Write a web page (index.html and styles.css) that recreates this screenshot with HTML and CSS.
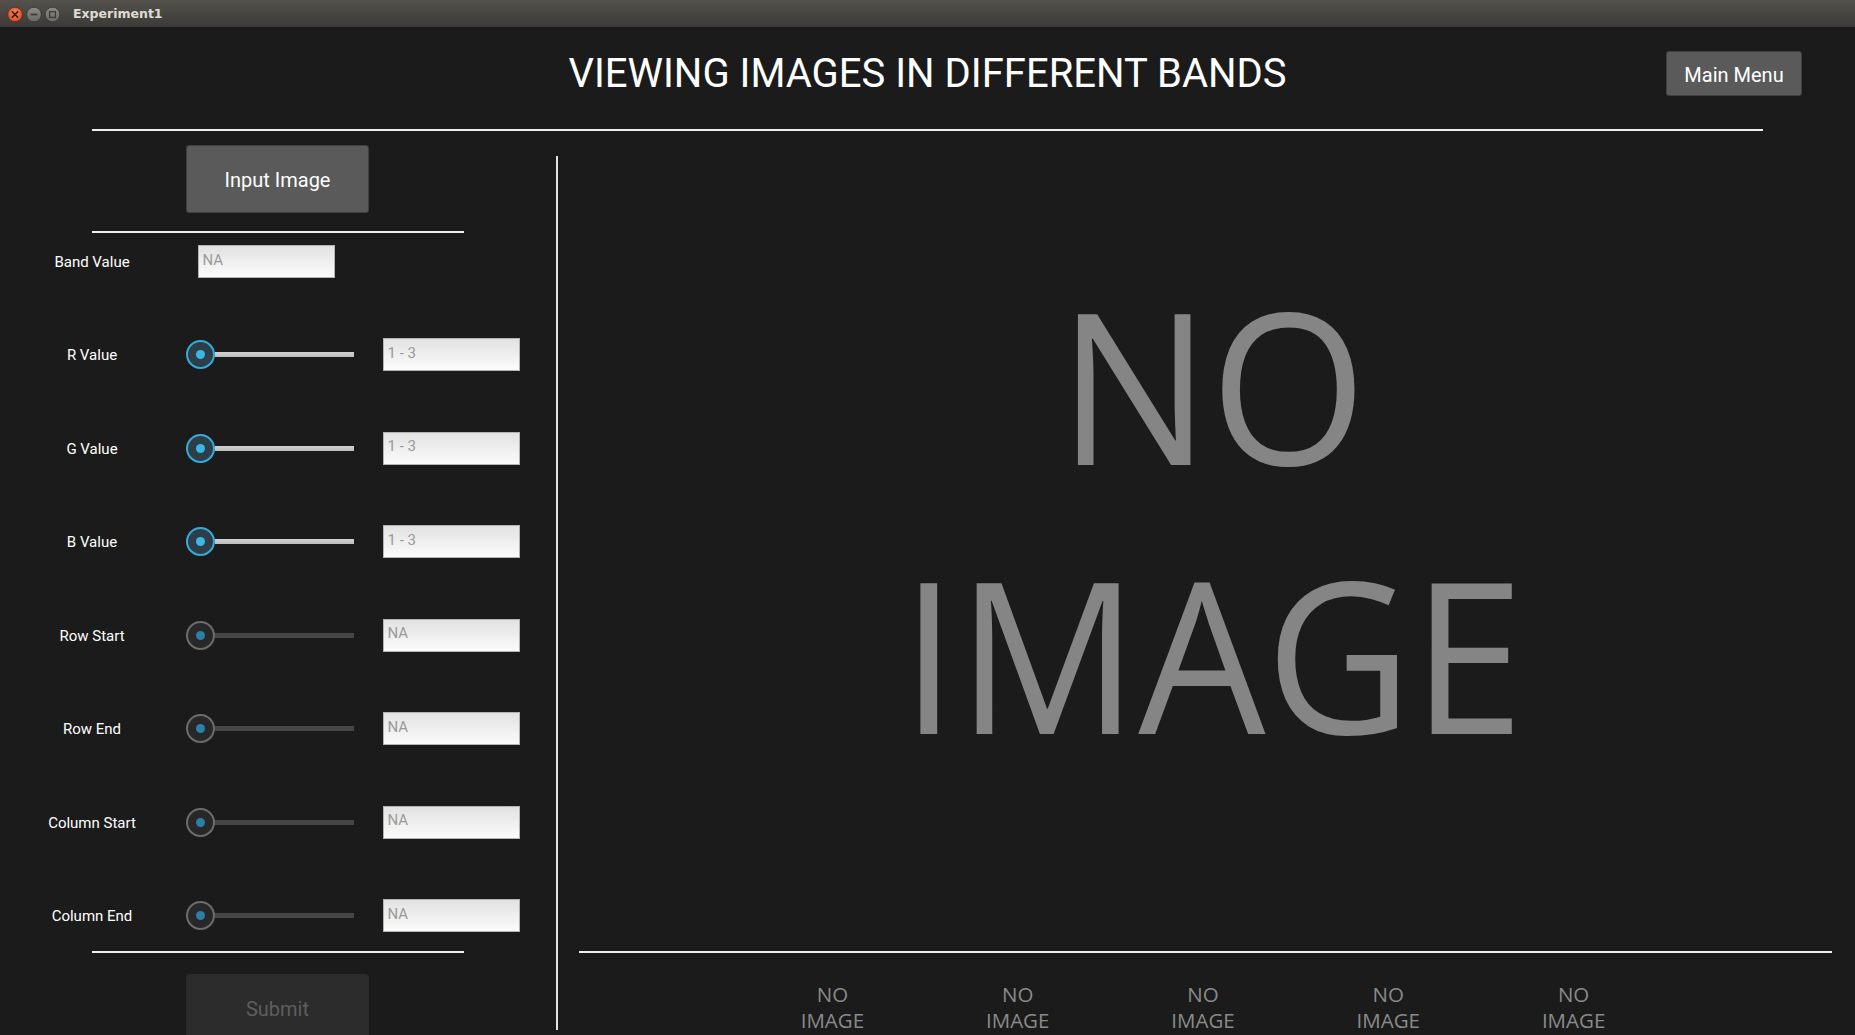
FILE: index.html
```html
<!DOCTYPE html>
<html>
<head>
<meta charset="utf-8">
<title>Experiment1</title>
<link rel="stylesheet" href="styles.css">
</head>
<body>
<div class="titlebar">
  <div class="wbtns">
    <svg width="73" height="27" viewBox="0 0 73 27">
      <defs>
        <radialGradient id="cl" cx="50%" cy="40%" r="60%">
          <stop offset="0" stop-color="#f58a5e"/>
          <stop offset="1" stop-color="#dd4a1e"/>
        </radialGradient>
        <linearGradient id="gr" x1="0" y1="0" x2="0" y2="1">
          <stop offset="0" stop-color="#8c8b86"/>
          <stop offset="1" stop-color="#6a6964"/>
        </linearGradient>
      </defs>
      <circle cx="15" cy="14.5" r="7.3" fill="url(#cl)" stroke="#5e2a16" stroke-width="0.8"/>
      <path d="M12.4 11.9 L17.6 17.1 M17.6 11.9 L12.4 17.1" stroke="#3a1a0c" stroke-width="1.6" stroke-linecap="round"/>
      <circle cx="34" cy="14.5" r="7.3" fill="url(#gr)" stroke="#35342f" stroke-width="0.8"/>
      <path d="M30.6 14.5 H37.4" stroke="#3c3b37" stroke-width="1.7"/>
      <circle cx="52.5" cy="14.5" r="7.3" fill="url(#gr)" stroke="#35342f" stroke-width="0.8"/>
      <rect x="49.6" y="11.6" width="5.8" height="5.8" fill="none" stroke="#3c3b37" stroke-width="1.3"/>
    </svg>
  </div>
  <span class="wtitle">Experiment1</span>
</div>

<div class="app">
  <header class="header">
    <div class="hdr-left"></div>
    <h1 class="title">VIEWING IMAGES IN DIFFERENT BANDS</h1>
    <div class="hdr-right"><button class="btn btn-menu">Main Menu</button></div>
  </header>
  <div class="rule rule-top"></div>

  <main class="main">
    <section class="left">
      <button class="btn btn-input">Input Image</button>
      <div class="rule rule-left"></div>
      <div class="rows">
        <div class="row">
          <span class="label">Band Value</span>
          <input class="field field-band" placeholder="NA">
        </div>
        <div class="row">
          <span class="label">R Value</span>
          <div class="slider on"><span class="knob"><span class="dot"></span></span><span class="track"></span></div>
          <input class="field" placeholder="1 - 3">
        </div>
        <div class="row">
          <span class="label">G Value</span>
          <div class="slider on"><span class="knob"><span class="dot"></span></span><span class="track"></span></div>
          <input class="field" placeholder="1 - 3">
        </div>
        <div class="row">
          <span class="label">B Value</span>
          <div class="slider on"><span class="knob"><span class="dot"></span></span><span class="track"></span></div>
          <input class="field" placeholder="1 - 3">
        </div>
        <div class="row">
          <span class="label">Row Start</span>
          <div class="slider off"><span class="knob"><span class="dot"></span></span><span class="track"></span></div>
          <input class="field" placeholder="NA">
        </div>
        <div class="row">
          <span class="label">Row End</span>
          <div class="slider off"><span class="knob"><span class="dot"></span></span><span class="track"></span></div>
          <input class="field" placeholder="NA">
        </div>
        <div class="row">
          <span class="label">Column Start</span>
          <div class="slider off"><span class="knob"><span class="dot"></span></span><span class="track"></span></div>
          <input class="field" placeholder="NA">
        </div>
        <div class="row">
          <span class="label">Column End</span>
          <div class="slider off"><span class="knob"><span class="dot"></span></span><span class="track"></span></div>
          <input class="field" placeholder="NA">
        </div>
      </div>
      <div class="rule rule-left rule-bottom"></div>
      <button class="btn btn-submit" disabled>Submit</button>
    </section>

    <div class="vline"></div>

    <section class="right">
      <div class="viewer">
        <div class="noimg">NO<br>IMAGE</div>
      </div>
      <div class="rule rule-right"></div>
      <div class="thumbs">
        <div class="thumb-item">NO<br>IMAGE</div>
        <div class="thumb-item">NO<br>IMAGE</div>
        <div class="thumb-item">NO<br>IMAGE</div>
        <div class="thumb-item">NO<br>IMAGE</div>
        <div class="thumb-item">NO<br>IMAGE</div>
      </div>
    </section>
  </main>
</div>
</body>
</html>
```

FILE: styles.css
```css
html, body {
  margin: 0;
  padding: 0;
}

body {
  width: 1855px;
  height: 1035px;
  overflow: hidden;
  background: #1b1b1b;
  font-family: Roboto, "Liberation Sans", sans-serif;
}

/* window title bar */
.titlebar {
  height: 27px;
  display: flex;
  align-items: center;
  background: linear-gradient(#53524d, #3b3a36);
}

.wbtns {
  width: 73px;
  height: 27px;
  flex: none;
}

.wbtns svg {
  display: block;
}

.wtitle {
  font-family: "DejaVu Sans", sans-serif;
  font-weight: bold;
  font-size: 12.5px;
  color: #dfdbd2;
}

/* header */
.header {
  display: grid;
  grid-template-columns: 1fr auto 1fr;
  align-items: center;
  padding-top: 24px;
  height: 45px;
}

.title {
  margin: 0;
  font-family: Roboto, "Liberation Sans", sans-serif;
  font-weight: 400;
  font-size: 40px;
  line-height: 45px;
  color: #ffffff;
  white-space: nowrap;
}

.hdr-right {
  display: flex;
  justify-content: flex-end;
  padding-right: 53px;
}

.rule {
  height: 2px;
  background: #eeeeee;
  flex: none;
}

.rule-top {
  margin: 33px 92px 0 92px;
}

/* buttons */
.btn {
  box-sizing: border-box;
  background: #5a5a5a;
  border: 1px solid #404040;
  border-radius: 3px;
  color: #ffffff;
  font-family: Roboto, "Liberation Sans", sans-serif;
  font-size: 20px;
  padding: 0;
  flex: none;
}

.btn-menu {
  width: 136px;
  height: 45px;
  padding-top: 2px;
}

.btn-input {
  width: 183px;
  height: 68px;
  margin: 14px 0 0 186px;
  padding-top: 2px;
}

.btn-submit {
  width: 183px;
  height: 68px;
  margin: 21px 0 0 186px;
  padding-top: 2px;
  background: #2c2c2c;
  border-color: #2a2a2a;
  color: #5e5e5e;
}

/* main */
.main {
  display: flex;
  height: 904px;
  overflow: hidden;
}

.left {
  width: 556px;
  flex: none;
  display: flex;
  flex-direction: column;
  align-items: flex-start;
}

.left > * {
  flex-shrink: 0;
}

.rule-left {
  width: 372px;
  margin: 18px 0 0 92px;
}

.rule-bottom {
  margin-top: 19px;
}

.rows {
  display: flex;
  flex-direction: column;
  gap: 60.46px;
  margin-top: 12px;
}

.row {
  display: flex;
  align-items: center;
  height: 33px;
}

.label {
  width: 184px;
  flex: none;
  text-align: center;
  color: #ffffff;
  font-size: 15px;
  padding-top: 1px;
}

/* sliders */
.slider {
  margin-left: 2px;
  width: 168px;
  height: 29px;
  display: flex;
  align-items: center;
  flex: none;
}

.knob {
  width: 29px;
  height: 29px;
  box-sizing: border-box;
  border-radius: 50%;
  border: 2px solid;
  display: flex;
  align-items: center;
  justify-content: center;
  flex: none;
}

.dot {
  width: 9px;
  height: 9px;
  border-radius: 50%;
}

.track {
  flex: 1;
  height: 5px;
}

.slider.on .knob {
  border-color: #37aadc;
  background: #2c3f48;
}

.slider.on .dot {
  background: #3cb6e8;
}

.slider.on .track {
  background: linear-gradient(#d2d2d2, #bcbcbc);
}

.slider.off .knob {
  border-color: #6c6c6c;
  background: #282828;
}

.slider.off .dot {
  background: #2b7fa8;
}

.slider.off .track {
  background: #464646;
}

/* text fields */
.field {
  box-sizing: border-box;
  width: 137px;
  height: 33px;
  margin: 0 0 0 28.5px;
  padding: 5px 4px 9px 4px;
  border: 1px solid #b3b3b3;
  border-radius: 0;
  background: linear-gradient(#e2e2e2, #fbfbfb);
  font-family: Roboto, "Liberation Sans", sans-serif;
  font-size: 15px;
  color: #333333;
  outline: none;
  flex: none;
}

.field::placeholder {
  color: #9a9a9a;
}

.field-band {
  margin-left: 13.5px;
}

/* divider between panels */
.vline {
  width: 2px;
  flex: none;
  background: #e2e2e2;
  margin: 25px 0 5px 0;
}

/* right panel */
.right {
  flex: 1;
  display: flex;
  flex-direction: column;
  padding: 0 23px 0 21px;
}

.viewer {
  height: 820px;
  box-sizing: border-box;
  padding: 117.6px 0 0 13px;
  text-align: center;
  flex: none;
}

.noimg {
  display: inline-block;
  font-family: "Open Sans", sans-serif;
  font-weight: 400;
  font-size: 211px;
  line-height: 269px;
  color: #858585;
  transform: scaleX(0.955);
}

.thumbs {
  display: flex;
  justify-content: center;
  padding: 27.7px 5px 0 0;
}

.thumb-item {
  width: 185.3px;
  text-align: center;
  font-family: "Open Sans", sans-serif;
  font-size: 20.5px;
  line-height: 26px;
  color: #8a8a8a;
}
```
